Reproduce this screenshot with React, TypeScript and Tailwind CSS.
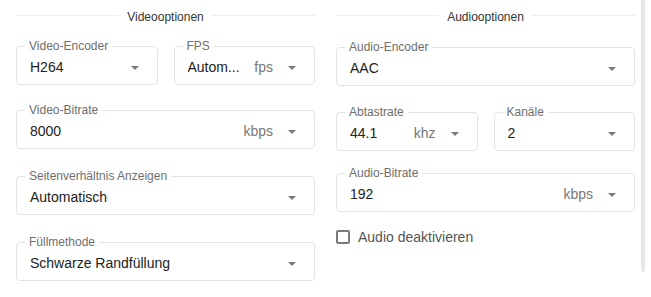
import React from "react";

function Arrow() {
  return (
    <svg width="8" height="4" viewBox="0 0 8 4" className="shrink-0">
      <path d="M0 0 L8 0 L4 4 Z" fill="#7a7a7a" />
    </svg>
  );
}

function Field({
  label,
  value,
  unit,
  className = "",
}: {
  label: string;
  value: string;
  unit?: string;
  className?: string;
}) {
  return (
    <div
      className={
        "relative h-[39px] rounded-[4px] border border-[#e3e3e3] bg-white flex items-center pl-[13px] pr-[18px] pt-[4px] " +
        className
      }
    >
      <span className="absolute left-[8px] top-[-8px] bg-white px-[4px] text-[12px] leading-[14px] text-[#6e6e6e]">
        {label}
      </span>
      <span className="flex-1 min-w-0 truncate text-[14px] text-[#222]">{value}</span>
      {unit && <span className="text-[14px] text-[#777] mr-[15px]">{unit}</span>}
      <Arrow />
    </div>
  );
}

function Heading({ children }: { children: React.ReactNode }) {
  return (
    <div className="flex items-center h-[18px] mt-[8px]">
      <div className="flex-1 h-px bg-[#ededed] mt-[-4px]" />
      <span className="px-[8px] text-[12px] text-[#333]">{children}</span>
      <div className="flex-1 h-px bg-[#ededed] mt-[-4px]" />
    </div>
  );
}

export default function App() {
  return (
    <div
      className="w-[651px] h-[297px] bg-white flex overflow-hidden"
      style={{ fontFamily: '"Liberation Sans", Arial, sans-serif' }}
    >
      <div className="w-[641px] flex pl-[16px] gap-[21px]">
        <div className="w-[299px] flex flex-col">
          <Heading>Videooptionen</Heading>
          <div className="flex gap-[16px] mt-[20px]">
            <Field label="Video-Encoder" value="H264" className="flex-1" />
            <Field label="FPS" value="Autom..." unit="fps" className="flex-1" />
          </div>
          <Field label="Video-Bitrate" value="8000" unit="kbps" className="mt-[25px]" />
          <Field label="Seitenverhältnis Anzeigen" value="Automatisch" className="mt-[27px]" />
          <Field label="Füllmethode" value="Schwarze Randfüllung" className="mt-[27px]" />
        </div>
        <div className="w-[299px] flex flex-col">
          <Heading>Audiooptionen</Heading>
          <Field label="Audio-Encoder" value="AAC" className="mt-[21px]" />
          <div className="flex gap-[16px] mt-[26px]">
            <Field label="Abtastrate" value="44.1" unit="khz" className="flex-1" />
            <Field label="Kanäle" value="2" className="flex-1" />
          </div>
          <Field label="Audio-Bitrate" value="192" unit="kbps" className="mt-[22px]" />
          <label className="flex items-center mt-[17px] h-[16px]">
            <span className="w-[14px] h-[14px] border-2 border-[#7a7a7a] rounded-[2px] bg-white" />
            <span className="ml-[8px] text-[14px] text-[#555]">Audio deaktivieren</span>
          </label>
        </div>
      </div>
      <div className="w-[4px] h-[272px] bg-[#e6e6ea] rounded-b-[2px]" />
    </div>
  );
}
